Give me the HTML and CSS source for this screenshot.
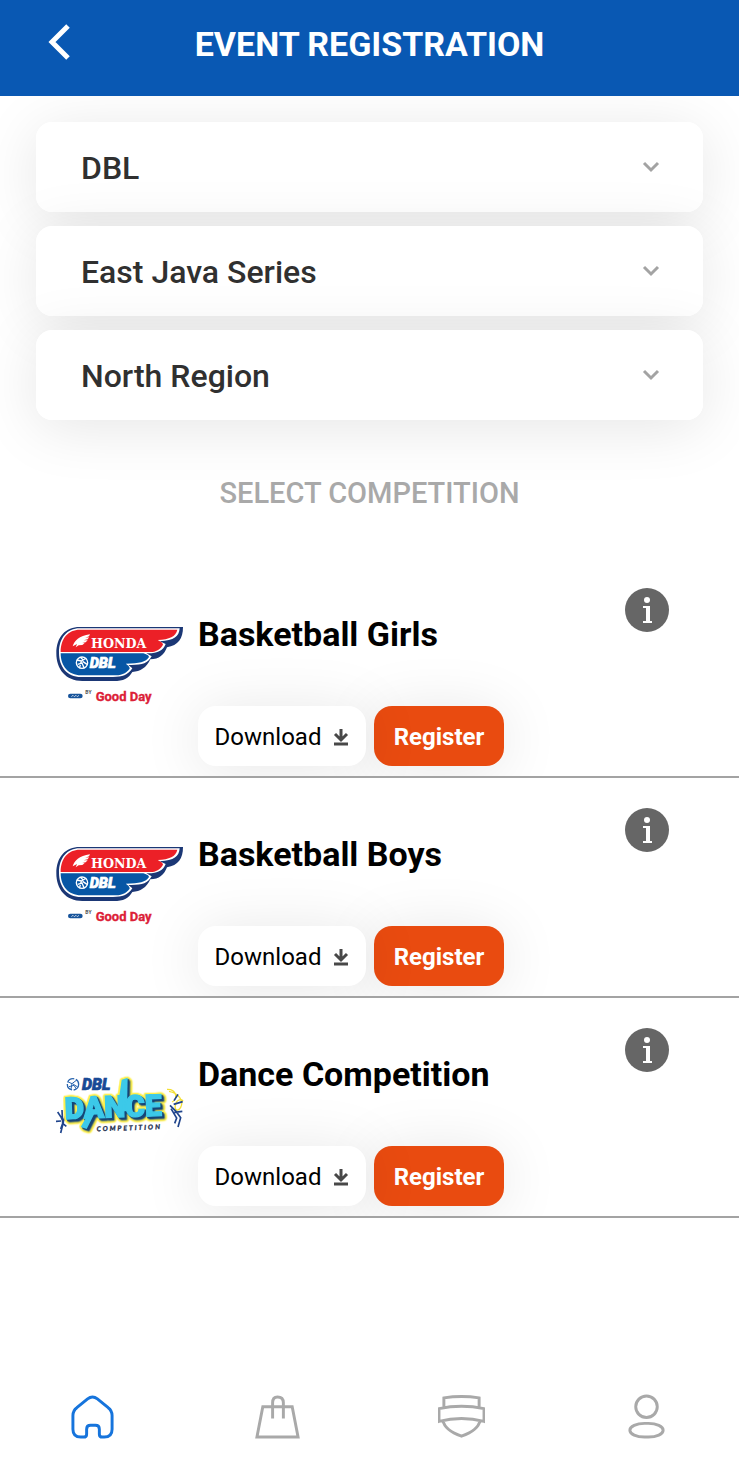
FILE: index.html
```
<!DOCTYPE html>
<html lang="en">
<head>
    <meta charset="UTF-8">
    <meta name="viewport" content="width=device-width, initial-scale=1.0">
    <title>Event Registration</title>
    <link rel="stylesheet" href="styles.css">
</head>
<body>
    <!-- shared icons and logos -->
    <svg class="sprite" aria-hidden="true">
        <symbol id="chevron" viewBox="0 0 18 12">
            <path d="M2 2l7 7 7-7" fill="none" stroke="#a3a3a3" stroke-width="3"/>
        </symbol>
        <symbol id="download" viewBox="0 0 16 18">
            <path d="M8 1v10M2 6l6 6 6-6M1 16h14" fill="none" stroke="#484848" stroke-width="3"/>
        </symbol>
        <symbol id="info" viewBox="0 0 44 44">
            <circle cx="22" cy="22" r="22" fill="#666"/>
            <circle cx="22" cy="12" r="3" fill="#fff"/>
            <path d="M18 18h7v15h2v2h-9v-2h3V20h-3z" fill="#fff"/>
        </symbol>
        <symbol id="hondaLogo" viewBox="33 30 384 246">
            <path d="M104 33H414C414 68 400 88 366 94C358 116 342 130 316 130C304 156 286 166 262 168C250 188 236 195 206 195H112C62 195 34 160 34 112C34 62 62 33 104 33Z" fill="#1b3775"/>
            <path d="M104 37H404C402 62 388 74 344 76L362 84C354 104 338 113 304 112L320 121C308 143 290 148 250 147L262 157C248 178 232 183 204 183H108C66 183 42 152 42 110C42 66 66 37 104 37Z" fill="#fff"/>
            <path d="M104 41H397C392 62 374 70 338 72C350 78 354 82 354 86C346 101 332 108 316 108H47C47 67 70 41 104 41Z" fill="#ec2027"/>
            <path d="M47 112H295C308 116 311 119 312 123C302 138 284 143 242 143C252 149 254 153 254 158C242 174 228 178 204 178H108C70 178 47 150 47 112Z" fill="#0756a5"/>
            <path d="M83 91C88 75 102 59 135 55L132 61L121 65L132 64L128 70L116 73L128 73L122 79L112 81L119 82L112 87L101 88L92 94L96 84Z" fill="#fff"/>
            <text class="hondaText" x="138" y="97">HONDA</text>
            <circle cx="111" cy="140" r="17" fill="none" stroke="#fff" stroke-width="4"/>
            <path d="M95 132L109 135L124 126M109 135L104 154M113 136L126 145M98 145L111 141L117 155M106 124L114 131" fill="none" stroke="#fff" stroke-width="4"/>
            <text class="dblText" x="134" y="156">DBL</text>
            <rect x="69" y="233" width="44" height="14" rx="7" fill="#17549b"/>
            <path d="M79 242l5-4 4 4 5-4 4 4 5-4" fill="none" stroke="#fff" stroke-width="2"/>
            <text class="byText" x="121" y="234">BY</text>
            <text class="goodDay" x="152" y="256">Good Day</text>
        </symbol>
        <symbol id="danceLogo" viewBox="33 15 384 246">
            <path d="M372 91C399 96 418 118 407 139C400 152 388 149 391 134C393 116 410 111 414 121M366 85C397 84 398 116 381 123" fill="none" stroke="#f3df35" stroke-width="4"/>
            <path d="M38 153L49 170L55 184L47 216M48 180L33 181M51 147L53 187L64 196M375 133L393 151L407 170L399 198M378 143L395 171L389 187M386 130L413 122M388 154L412 151M61 165L47 204M387 119L399 100" fill="none" stroke="#1f448c" stroke-width="5"/>
            <g class="danceArt">
                <path d="M134 150L148 158L125 204L107 198Z"/>
                <path d="M216 154L230 56L248 50L246 150Z"/>
                <text class="danceText" x="60" y="174" transform="rotate(-2 60 174)">DANCE</text>
            </g>
            <circle cx="84" cy="70" r="17" fill="none" stroke="#2864ae" stroke-width="4" stroke-dasharray="24 5"/>
            <path d="M70 63L81 68L94 58M81 68L78 84M84 69L98 78M72 77L87 73L94 84" fill="none" stroke="#2864ae" stroke-width="3"/>
            <text class="dblText dblBlue" x="111" y="87">DBL</text>
            <text class="competitionText" x="155" y="211" transform="rotate(-2 155 211)">COMPETITION</text>
        </symbol>
    </svg>

    <div class="mainApp">
        <header class="topBar">
            <button class="backBtn" type="button" aria-label="Back">
                <svg width="22" height="36" viewBox="0 0 22 36"><path d="M20 2L4 18l16 16" fill="none" stroke="#fff" stroke-width="5"/></svg>
            </button>
            <h1 class="title">EVENT REGISTRATION</h1>
        </header>

        <main>
            <form class="filters">
                <div class="filter">
                    <select aria-label="Competition league"><option>DBL</option></select>
                    <svg class="chevron"><use href="#chevron"/></svg>
                </div>
                <div class="filter">
                    <select aria-label="Series"><option>East Java Series</option></select>
                    <svg class="chevron"><use href="#chevron"/></svg>
                </div>
                <div class="filter">
                    <select aria-label="Region"><option>North Region</option></select>
                    <svg class="chevron"><use href="#chevron"/></svg>
                </div>
            </form>

            <h2 class="sectionTitle">SELECT COMPETITION</h2>

            <section class="competition">
                <svg class="logo" role="img" aria-label="Honda DBL by Good Day"><use href="#hondaLogo"/></svg>
                <div class="details">
                    <h3 class="name">Basketball Girls</h3>
                    <div class="actions">
                        <button class="btn downloadBtn" type="button">Download <svg class="downloadIcon"><use href="#download"/></svg></button>
                        <button class="btn registerBtn" type="button">Register</button>
                    </div>
                </div>
                <button class="infoBtn" type="button" aria-label="About Basketball Girls"><svg class="infoIcon"><use href="#info"/></svg></button>
            </section>

            <section class="competition">
                <svg class="logo" role="img" aria-label="Honda DBL by Good Day"><use href="#hondaLogo"/></svg>
                <div class="details">
                    <h3 class="name">Basketball Boys</h3>
                    <div class="actions">
                        <button class="btn downloadBtn" type="button">Download <svg class="downloadIcon"><use href="#download"/></svg></button>
                        <button class="btn registerBtn" type="button">Register</button>
                    </div>
                </div>
                <button class="infoBtn" type="button" aria-label="About Basketball Boys"><svg class="infoIcon"><use href="#info"/></svg></button>
            </section>

            <section class="competition">
                <svg class="logo" role="img" aria-label="DBL Dance Competition"><use href="#danceLogo"/></svg>
                <div class="details">
                    <h3 class="name">Dance Competition</h3>
                    <div class="actions">
                        <button class="btn downloadBtn" type="button">Download <svg class="downloadIcon"><use href="#download"/></svg></button>
                        <button class="btn registerBtn" type="button">Register</button>
                    </div>
                </div>
                <button class="infoBtn" type="button" aria-label="About Dance Competition"><svg class="infoIcon"><use href="#info"/></svg></button>
            </section>
        </main>

        <nav class="bottomNav">
            <a class="navItem active" href="#home" aria-label="Home">
                <svg viewBox="0 0 48 48"><path d="M19 5Q24 1 29 5L40 14Q44 17 44 22V36Q44 44 36 44H34Q31 44 31 41V36Q31 32 27 32H22Q18 32 18 36V41Q18 44 15 44H12Q4 44 4 36V22Q4 17 8 14Z"/></svg>
            </a>
            <a class="navItem" href="#shop" aria-label="Shop">
                <svg viewBox="0 0 48 48"><path d="M9 13H39L45 44H3ZM19 25V9Q19 3 24 3Q30 3 30 9V25"/></svg>
            </a>
            <a class="navItem" href="#team" aria-label="Team">
                <svg viewBox="0 0 48 48"><path d="M6 14V4Q24 1 42 4V14M1 15Q24 10 47 15V28Q24 22 1 28ZM5 27Q7 37 24 43Q41 37 43 27"/></svg>
            </a>
            <a class="navItem" href="#profile" aria-label="Profile">
                <svg viewBox="0 0 48 48"><circle cx="24" cy="13" r="11"/><rect x="7" y="30" width="34" height="14" rx="15" ry="7"/></svg>
            </a>
        </nav>
    </div>
</body>
</html>
```
FILE: styles.css
```
* {
    box-sizing: border-box;
}
body {
    margin: 0;
    font-family: Roboto, Arial, sans-serif;
    background-color: #fff;
}
button,
select {
    font-family: inherit;
}
button {
    border: none;
    cursor: pointer;
}
h1,
h2,
h3 {
    margin: 0;
}
.sprite {
    position: absolute; /* keeps the icon sheet out of the layout */
    width: 0;
    height: 0;
}
.mainApp {
    display: flex;
    flex-direction: column;
    min-height: 100vh;
}

/* Header */
.topBar {
    display: grid;
    grid-template-columns: 72px 1fr 72px;
    align-items: center;
    height: 96px;
    padding-bottom: 8px;
    background-color: #0958b3;
    position: relative;
    z-index: 1;
}
.backBtn {
    display: flex;
    justify-content: flex-end;
    padding: 0 2px 4px 0;
    background-color: transparent;
}
.title {
    color: #fff;
    text-align: center;
    font-size: 34px;
    line-height: 40px;
    font-weight: bold;
}

/* Drop-downs */
.filters {
    display: flex;
    flex-direction: column;
    gap: 14px;
    padding: 26px 36px 0;
}
.filter {
    position: relative;
    border-radius: 16px;
    box-shadow: 0 8px 60px rgba(0, 0, 0, 0.1);
}
.filter select {
    appearance: none;
    display: block;
    width: 100%;
    height: 90px;
    padding: 2px 80px 0 45px;
    border: none;
    border-radius: 16px;
    background-color: #fff;
    color: #303030;
    font-size: 32px;
    font-weight: 500;
}
.chevron {
    position: absolute;
    top: 39px;
    right: 43px;
    width: 18px;
    height: 12px;
    pointer-events: none;
}
.sectionTitle {
    margin: 53px 0 45px;
    color: #a9a9a9;
    text-align: center;
    font-size: 29px;
    line-height: 40px;
    font-weight: 500;
}

/* Competition list */
.competition {
    display: flex;
    height: 220px;
    padding: 0 70px 10px 56px;
    border-bottom: 2px solid #a3a3a3;
    overflow: hidden;
}
.logo {
    flex: none;
    width: 128px;
    height: 82px;
    margin: 68px 14px 0 0;
}
.details {
    display: flex;
    flex: 1;
    flex-direction: column;
    justify-content: space-between;
    padding-top: 56px;
}
.name {
    color: #000;
    font-size: 34px;
    line-height: 40px;
    font-weight: bold;
}
.actions {
    display: flex;
    gap: 8px;
}
.btn {
    display: flex;
    align-items: center;
    justify-content: center;
    height: 60px;
    padding: 2px 0 0;
    border-radius: 18px;
    font-size: 24px;
    box-shadow: 0 4px 60px rgba(0, 0, 0, 0.1);
}
.downloadBtn {
    gap: 12px;
    width: 168px;
    background-color: #fff;
    color: #000;
    position: relative;
    z-index: 1;
}
.downloadIcon {
    width: 16px;
    height: 18px;
}
.registerBtn {
    position: relative;
    width: 130px;
    background-color: #e94b10;
    color: #fff;
    font-weight: bold;
}
.infoBtn {
    align-self: flex-start;
    margin-top: 30px;
    padding: 0;
    background-color: transparent;
}
.infoIcon {
    display: block;
    width: 44px;
    height: 44px;
}

/* Bottom navigation */
.bottomNav {
    display: grid;
    grid-template-columns: repeat(4, 1fr);
    height: 122px;
    margin-top: auto;
}
.navItem {
    display: flex;
    align-items: center;
    justify-content: center;
}
.navItem svg {
    width: 47px;
    height: 47px;
    fill: none;
    stroke: #a9a9a9;
    stroke-width: 3;
}
.navItem.active svg {
    stroke: #1674dc;
}

/* Logo lettering */
.hondaText {
    fill: #fff;
    font: bold 38px "DejaVu Serif", serif;
}
.dblText {
    fill: #fff;
    stroke: #fff;
    stroke-width: 2;
    font: italic 900 44px Roboto, sans-serif;
}
.dblBlue {
    fill: #184995;
    stroke: #184995;
    font-size: 48px;
}
.byText {
    fill: #555;
    font: bold 15px Roboto, sans-serif;
}
.goodDay {
    fill: #dc2037;
    stroke: #dc2037;
    font: bold 39px Roboto, sans-serif;
}
.danceArt {
    fill: #3cc9e9;
    filter: drop-shadow(4px 4px 0 #164576) drop-shadow(4px 4px 0 #164576)
        drop-shadow(4px 0 0 #fff04d) drop-shadow(-4px 0 0 #fff04d)
        drop-shadow(0 4px 0 #fff04d) drop-shadow(0 -4px 0 #fff04d);
}
.danceText {
    stroke: #3cc9e9;
    stroke-width: 4;
    font: 900 90px Roboto, sans-serif;
}
.competitionText {
    fill: #222d4c;
    stroke: #222d4c;
    font: italic bold 20px Lato, sans-serif;
    letter-spacing: 6px;
}
```
